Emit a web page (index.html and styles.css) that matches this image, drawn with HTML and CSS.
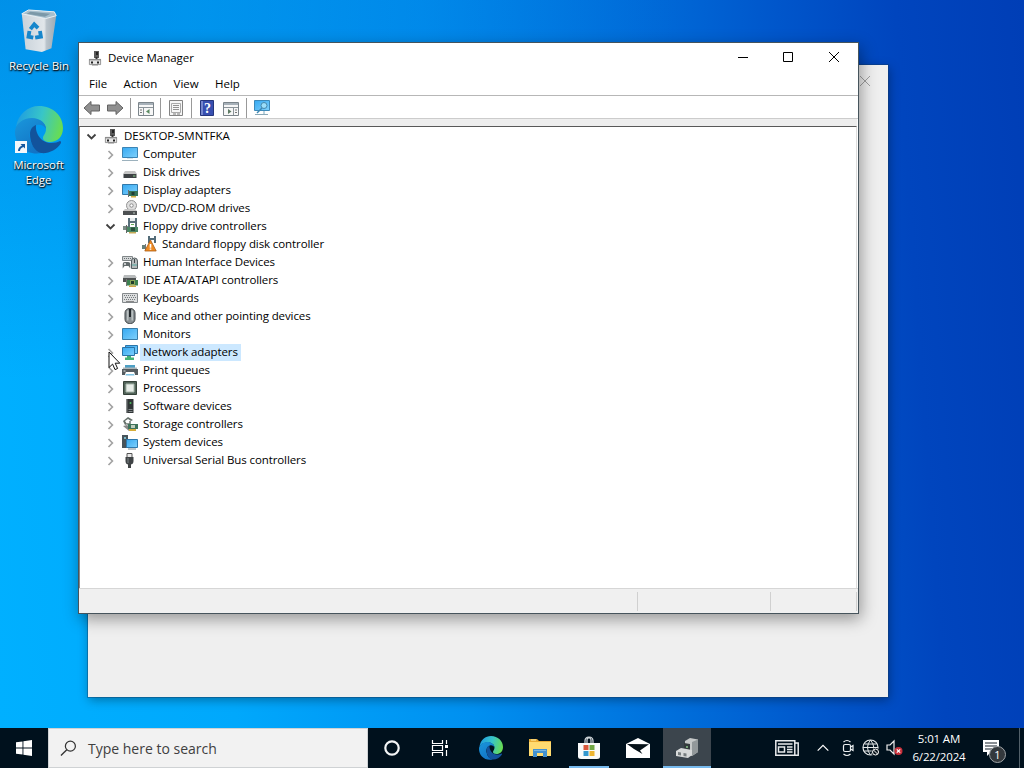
FILE: index.html
```html
<!DOCTYPE html>
<html lang="en">
<head>
	<meta charset="utf-8">
	<title>Device Manager</title>
	<link rel="stylesheet" href="styles.css">
</head>
<body>
	<svg class="sprite" aria-hidden="true">
		<defs>
			<linearGradient id="screen" x1="0" y1="0" x2="1" y2="1">
				<stop offset="0" stop-color="#36a9f2"/><stop offset="1" stop-color="#7fd0fb"/>
			</linearGradient>
			<linearGradient id="edge-top" x1="0" y1="0.4" x2="1" y2="0.6">
				<stop offset="0" stop-color="#1f9de0"/><stop offset="0.5" stop-color="#38c5c8"/><stop offset="1" stop-color="#6bde4c"/>
			</linearGradient>
			<linearGradient id="edge-left" x1="0" y1="0" x2="0.6" y2="1">
				<stop offset="0" stop-color="#1a97dc"/><stop offset="1" stop-color="#1273c4"/>
			</linearGradient>
			<linearGradient id="bin" x1="0" y1="0" x2="1" y2="0">
				<stop offset="0" stop-color="#c9d2da"/><stop offset="0.65" stop-color="#e1e6ea"/><stop offset="0.72" stop-color="#b9c3cb"/><stop offset="1" stop-color="#9eabb5"/>
			</linearGradient>
		</defs>
		<symbol id="i-right" viewBox="0 0 16 16"><path d="M6.500 5 10.400 9l-3.900 4" fill="none" stroke="#a3a3a3" stroke-width="1.700"/></symbol>
		<symbol id="i-down" viewBox="0 0 16 16"><path d="M4.500 6.500l4 4 4-4" fill="none" stroke="#404040" stroke-width="1.800"/></symbol>
		<symbol id="i-device" viewBox="0 0 16 16">
			<path d="M7 1h5v7H7z" fill="#5a5a5a"/><path d="M9 2h2v3H9z" fill="#242424"/>
			<path d="M8.500 7h2v3h-2z" fill="#333"/>
			<path d="M2.400 9.400h11.200v5.200H2.400z" fill="#e6e6e6" stroke="#808080" stroke-width=".8"/>
			<path d="M2 9h12v1.400H2z" fill="#8d8d8d"/><path d="M4 11.500h2v2H4zM10 11.500h2v2h-2z" fill="#222"/><path d="M5 14.600h6v.8H5z" fill="#777"/>
		</symbol>
		<symbol id="i-computer" viewBox="0 0 16 16">
			<path d="M.5 1.500h15v10H.5z" fill="url(#screen)" stroke="#3b84b5"/>
			<path d="M0 14h16v1H0z" fill="#9cb1bd"/><path d="M5 12h6v1H5z" fill="#d6e3ea"/>
		</symbol>
		<symbol id="i-disk" viewBox="0 0 16 16">
			<path d="M3 7h10l2 3H1z" fill="#c4c4c4"/><path d="M1.500 10h13v4h-13z" fill="#3d4144"/><path d="M11 11.500h2.400v1H11z" fill="#8fd08d"/>
		</symbol>
		<symbol id="i-display" viewBox="0 0 16 16">
			<path d="M.5 2.500h15v10H.5z" fill="url(#screen)" stroke="#3279aa"/>
			<path d="M7 9h9v5H7z" fill="#37745a"/><path d="M9.500 10h3v3h-3z" fill="#203d35"/><path d="M9 14h5v1.500H9z" fill="#d2ad43"/><path d="M6 8h1v7H6z" fill="#697074"/>
		</symbol>
		<symbol id="i-dvd" viewBox="0 0 16 16">
			<circle cx="9.500" cy="5.500" r="5" fill="#dedede" stroke="#949494"/><circle cx="9.500" cy="5.500" r="1.700" fill="#fff" stroke="#8b8b8b"/>
			<path d="M3 9h10l2 2H1z" fill="#c5c5c5"/><path d="M1 11h14v4H1z" fill="#4d5052"/><path d="M11 12.400h2v1h-2z" fill="#b9c7bd"/>
		</symbol>
		<symbol id="i-floppy" viewBox="0 0 16 16">
			<path d="M6 0h9v9H6z" fill="#596f7a"/><path d="M8 0h5v3H8z" fill="#e9eef0"/><path d="M8 5h5v4H8z" fill="#fff"/><path d="M9 6.500h3" stroke="#68ad59"/>
			<path d="M1 8h5v4H1z" fill="#798b85"/><path d="M5 9h11v5H5z" fill="#4b8765"/><path d="M9 9.500h4v3.500H9z" fill="#294f3c"/><path d="M7 14h7v1.500H7z" fill="#c6ab57"/><path d="M4 7h1v8H4z" fill="#666"/>
		</symbol>
		<symbol id="i-warning" viewBox="0 0 16 16">
			<path d="M7 0h8v7H7z" fill="#536b78"/><path d="M9 0h4v2H9zM9 4h4v3H9z" fill="#fff"/>
			<path d="M1 9h4v4H1z" fill="#66817b"/><path d="M4 8h1v6H4z" fill="#777"/>
			<path d="m9.500 4 5.700 11H3.800z" fill="#ef8b22" stroke="#a95a12" stroke-width=".8"/><path d="M8.700 8h1.600v3.700H8.700zM8.700 12.500h1.600v1.300H8.700z" fill="#fff"/>
		</symbol>
		<symbol id="i-hid" viewBox="0 0 16 16">
			<path d="M.500 2.500h10v4H.5z" fill="#d4d7d8" stroke="#818789"/><path d="M2 4.500h8" stroke="#686f72" stroke-dasharray="1 1"/>
			<path d="M9.500 14.500V7q0-3 3-3t3 3v7.500z" fill="#b5babb" stroke="#555e61"/><path d="M12.500 5v4" stroke="#41494c"/>
			<path d="M.7 14.500V10q0-2 2.200-2h3.200q2.200 0 2.200 2v4.500L6.500 12h-4z" fill="#626a6c"/><path d="M2 10h2M3 9v2" stroke="#fff" stroke-width=".8"/><path d="M10 11h5" stroke="#54aaa2"/>
		</symbol>
		<symbol id="i-ide" viewBox="0 0 16 16">
			<path d="M2 3h11l2 3H1z" fill="#b8bbbc"/><path d="M1 6h13v4H1z" fill="#4e5252"/>
			<path d="M5 8h11v5.500H5z" fill="#3d8251"/><path d="M8.500 8.500h4v4h-4z" fill="#1f3d2b" stroke="#b5c665" stroke-width=".7"/><path d="M7 13.500h7V15H7z" fill="#d0a646"/><path d="M4 7h1v7H4z" fill="#737373"/>
		</symbol>
		<symbol id="i-keyboard" viewBox="0 0 16 16">
			<path d="M.5 3.500h15v9H.5z" fill="#dcdedf" stroke="#858a8d"/><path d="M2 5.500h12M2 9.500h12" stroke="#747a7d" stroke-dasharray="1 1"/><path d="M3 7.500h11" stroke="#747a7d" stroke-dasharray="1 1"/><path d="M4 11.500h8" stroke="#888"/>
		</symbol>
		<symbol id="i-mouse" viewBox="0 0 16 16">
			<rect x="3" y=".5" width="10" height="15" rx="4.400" fill="#899093" stroke="#3f4548"/><path d="M5.800 2.500v10M10.200 2.500v10" stroke="#c4cacb" stroke-width="1.300"/><path d="M8 1v8" stroke="#22282b" stroke-width="2"/>
		</symbol>
		<symbol id="i-monitor" viewBox="0 0 16 16"><path d="M.5 2.500h15v11H.5z" fill="url(#screen)" stroke="#377ca8"/></symbol>
		<symbol id="i-network" viewBox="0 0 16 16">
			<path d="M3.500 1.500h12v8h-12z" fill="url(#screen)" stroke="#2c75a8"/><path d="M.5 3.500h12v8H.5z" fill="url(#screen)" stroke="#2c75a8"/>
			<path d="M5 12h4v1.500h3V16H3v-2.500h2z" fill="#45b276"/>
		</symbol>
		<symbol id="i-print" viewBox="0 0 16 16">
			<path d="M3 3h10v3H3z" fill="#4e9fc4"/><path d="M1 5.500h14v2H1z" fill="#aeb4b7"/><path d="M0 7h16v6h-3l-1-3H4l-1 3H0z" fill="#555c60"/><path d="M4 10h8l1 4H3z" fill="#fff"/><path d="M4 12h8l.5 1.500h-9z" fill="#7fc2e2"/><path d="M1.500 9h2" stroke="#e1e5e6"/>
		</symbol>
		<symbol id="i-cpu" viewBox="0 0 16 16"><path d="M1.500 1.500h13v13h-13z" fill="#52645a" stroke="#354239"/><path d="M4 4h8v8H4z" fill="#e7ede8" stroke="#a6b6aa"/></symbol>
		<symbol id="i-software" viewBox="0 0 16 16"><path d="M4.500 1h7v14h-7z" fill="#303536"/><path d="M4.500 1h1v14h-1z" fill="#737979"/><circle cx="8.500" cy="5" r="1" fill="#4eb65f"/><path d="M6.500 11h4v1h-4zM6.500 13h4v1h-4z" fill="#848a8b"/></symbol>
		<symbol id="i-storage" viewBox="0 0 16 16">
			<path d="m1 5 5-4 5 3-2 1-3-2-3 2 2 3-2 1z" fill="#66716b"/><path d="M8 5v3H4.500" fill="none" stroke="#6b7771" stroke-width="1.500"/>
			<path d="m1 10 4-1 4 3-2 3z" fill="#888"/><path d="M6 8h10v5H6z" fill="#3f745b"/><path d="M9 9h4v3H9z" fill="#bfcdbd"/><path d="M7 13h7v2H7z" fill="#d6ad3b"/>
		</symbol>
		<symbol id="i-system" viewBox="0 0 16 16">
			<path d="M0 1h6v13H0z" fill="#47545b"/><circle cx="3" cy="4" r="1" fill="#8dd8e9"/><path d="M4.500 5.500h11v8h-11z" fill="url(#screen)" stroke="#2d78ac"/><path d="M6 15h8" stroke="#7c8b92"/>
		</symbol>
		<symbol id="i-usb" viewBox="0 0 16 16"><path d="M5 1.500h5v4H5z" fill="#e9e9e9" stroke="#555"/><path d="M3.500 5h8v4q0 3-2.500 3.500V16H6v-3.500Q3.500 12 3.500 9z" fill="#404446"/><path d="M5.500 6h1v5h-1z" fill="#7d8385"/></symbol>
		<symbol id="i-edge" viewBox="0 0 48 48">
			<path d="M1 21C3 8 13 0 24 0c14 0 24 10 24 22 0 9-6 14-13 14-5 0-7-2-7-4 0-3 3-4 3-9 0-6-6-10-13-10C10 13 4 16 1 21z" fill="url(#edge-top)"/>
			<path d="M0 26C0 18 8 12 17 12c8 0 14 5 14 11-2-4-6-5-9-4-6 2-8 8-7 13 1 8 6 13 12 15C11 50 0 39 0 26z" fill="url(#edge-left)"/>
			<path d="M15 28c0-5 3-8 6-9-1 8 5 18 15 18 4 0 7-1 9-2 1 0 1 1 1 2-4 7-13 11-20 10-7-2-11-10-11-19z" fill="#12539c"/>
		</symbol>
	</svg>

	<main class="desktop">
		<section class="shortcuts">
			<div class="shortcut">
				<svg class="bin-icon" viewBox="0 0 40 46">
					<path d="m2 5 7-4 27 2 2 4-5 34-10 4-17-3z" fill="url(#bin)"/>
					<path d="m2 5 7-4 27 2 2 4-11 3z" fill="#a7bfcd" stroke="#e8eff3"/><path d="m7 5 4-2 21 2-6 3z" fill="#7b98a8"/>
					<g fill="none" stroke="#1686cc" stroke-width="4"><path d="m11 21 4-5 4 4"/><path d="m21 23 1 6-6 1"/><path d="m14 30-5-1 1-6"/></g>
				</svg>
				<span>Recycle Bin</span>
			</div>
			<div class="shortcut edge-shortcut">
				<svg class="edge-icon"><use href="#i-edge"/></svg>
				<svg class="link-badge" viewBox="0 0 12 12"><path d="M0 0h12v12H0z" fill="#f5f7fa"/><path d="M3 10q0-4 4-5.500L5.500 3H10v4.500L8.500 6Q5 7 5 10z" fill="#17579e"/></svg>
				<span>Microsoft<br>Edge</span>
			</div>
		</section>

		<section class="back-window">
			<svg viewBox="0 0 12 12"><path d="m1 1 10 10M11 1 1 11" stroke="#a0a0a0" fill="none"/></svg>
		</section>

		<section class="window">
			<header class="titlebar">
				<svg class="icon"><use href="#i-device"/></svg>
				<h1>Device Manager</h1>
				<div class="window-buttons">
					<svg viewBox="0 0 12 12"><path d="M1 6.500h10" stroke="#000"/></svg>
					<svg viewBox="0 0 12 12"><path d="M1.500 1.500h9v9h-9z" stroke="#000" fill="none"/></svg>
					<svg viewBox="0 0 12 12"><path d="m1 1 10 10M11 1 1 11" stroke="#000"/></svg>
				</div>
			</header>
			<nav class="menu"><span>File</span><span>Action</span><span>View</span><span>Help</span></nav>
			<div class="toolbar">
				<svg viewBox="0 0 18 18"><path d="M1 9 8 2.500V6h8.500v6H8v3.500z" fill="#909090" stroke="#626262"/></svg>
				<svg class="forward" viewBox="0 0 18 18"><path d="M17 9 10 2.500V6H1.500v6H10v3.500z" fill="#909090" stroke="#626262"/></svg>
				<i></i>
				<svg viewBox="0 0 18 18"><path d="M1.500 3.500h15v13h-15z" fill="#f7f7f7" stroke="#7c858b"/><path d="M2 4h14v2H2z" fill="#a7b1b9"/><path d="M2 8.500h14M6.500 9v7" stroke="#8b949a"/><path d="M3 11h2M3 13.500h2" stroke="#777"/><path d="m12.500 10-3.500 2.500 3.500 2.500z" fill="#5c8b62"/></svg>
				<i></i>
				<svg viewBox="0 0 18 18"><path d="M2.500 1.500h13v15h-13z" fill="#f6f6f6" stroke="#838383"/><path d="M4.500 4.500h9v9h-9z" fill="none" stroke="#aaa"/><path d="M6 6.500h6M6 8.500h6M6 10.500h6" stroke="#929292"/><path d="M6 15h3M10 15h3" stroke="#777"/></svg>
				<i></i>
				<svg viewBox="0 0 18 18"><path d="M2.500 1.500h13v15h-13z" fill="#384fb0" stroke="#25357c"/><path d="M3 2h2v14H3z" fill="#7586cd"/><text x="6" y="14" class="help-mark">?</text></svg>
				<svg viewBox="0 0 18 18"><path d="M1.500 3.500h15v13h-15z" fill="#f7f7f7" stroke="#7c858b"/><path d="M2 4h14v2H2z" fill="#a7b1b9"/><path d="M2 8.500h14M11.500 9v7" stroke="#8b949a"/><path d="M13 11h2M13 13.500h2" stroke="#777"/><path d="m6 10 3.500 2.500L6 15z" fill="#5c7a62"/></svg>
				<i></i>
				<svg viewBox="0 0 18 18"><path d="M1.500 1.500h15v10h-15z" fill="url(#screen)" stroke="#3c89b9"/><circle cx="11" cy="6.500" r="3" fill="#9cdef9" stroke="#4688ac"/><path d="m9 9-5 5" stroke="#3d88b4" stroke-width="1.500"/><path d="M2 15.500h13" stroke="#8aa8b7"/><path d="M11 12v3" stroke="#76a8c0"/></svg>
			</div>
			<div class="tree">
				<div class="row root"><svg><use href="#i-down"/></svg><svg><use href="#i-device"/></svg><span>DESKTOP-SMNTFKA</span></div>
				<div class="row"><svg><use href="#i-right"/></svg><svg><use href="#i-computer"/></svg><span>Computer</span></div>
				<div class="row"><svg><use href="#i-right"/></svg><svg><use href="#i-disk"/></svg><span>Disk drives</span></div>
				<div class="row"><svg><use href="#i-right"/></svg><svg><use href="#i-display"/></svg><span>Display adapters</span></div>
				<div class="row"><svg><use href="#i-right"/></svg><svg><use href="#i-dvd"/></svg><span>DVD/CD-ROM drives</span></div>
				<div class="row"><svg><use href="#i-down"/></svg><svg><use href="#i-floppy"/></svg><span>Floppy drive controllers</span></div>
				<div class="row child"><svg><use href="#i-warning"/></svg><span>Standard floppy disk controller</span></div>
				<div class="row"><svg><use href="#i-right"/></svg><svg><use href="#i-hid"/></svg><span>Human Interface Devices</span></div>
				<div class="row"><svg><use href="#i-right"/></svg><svg><use href="#i-ide"/></svg><span>IDE ATA/ATAPI controllers</span></div>
				<div class="row"><svg><use href="#i-right"/></svg><svg><use href="#i-keyboard"/></svg><span>Keyboards</span></div>
				<div class="row"><svg><use href="#i-right"/></svg><svg><use href="#i-mouse"/></svg><span>Mice and other pointing devices</span></div>
				<div class="row"><svg><use href="#i-right"/></svg><svg><use href="#i-monitor"/></svg><span>Monitors</span></div>
				<div class="row selected"><svg><use href="#i-right"/></svg><svg><use href="#i-network"/></svg><span>Network adapters</span></div>
				<div class="row"><svg><use href="#i-right"/></svg><svg><use href="#i-print"/></svg><span>Print queues</span></div>
				<div class="row"><svg><use href="#i-right"/></svg><svg><use href="#i-cpu"/></svg><span>Processors</span></div>
				<div class="row"><svg><use href="#i-right"/></svg><svg><use href="#i-software"/></svg><span>Software devices</span></div>
				<div class="row"><svg><use href="#i-right"/></svg><svg><use href="#i-storage"/></svg><span>Storage controllers</span></div>
				<div class="row"><svg><use href="#i-right"/></svg><svg><use href="#i-system"/></svg><span>System devices</span></div>
				<div class="row"><svg><use href="#i-right"/></svg><svg><use href="#i-usb"/></svg><span>Universal Serial Bus controllers</span></div>
			</div>
			<footer class="statusbar"><div></div><div></div><div></div></footer>
		</section>
		<svg class="cursor" viewBox="0 0 13 20"><path d="M1 1v15.500l3.600-3.400 2.400 5.500 2.600-1.100-2.400-5.300h4.600z" fill="#fff" stroke="#111"/></svg>
	</main>

	<footer class="taskbar">
		<div class="start"><svg viewBox="0 0 16 16"><path d="M0 2.300 6.500 1.400v6.100H0zM7.400 1.300 16 0v7.500H7.400zM0 8.400h6.500v6.200L0 13.700zM7.400 8.400H16V16l-8.600-1.200z" fill="#fff"/></svg></div>
		<div class="search">
			<svg viewBox="0 0 18 18"><circle cx="11" cy="6.500" r="5.300" fill="none" stroke="#333" stroke-width="1.300"/><path d="M7.200 10.300 1 16.500" stroke="#333" stroke-width="1.400"/></svg>
			<span>Type here to search</span>
		</div>
		<div class="apps">
			<div><svg viewBox="0 0 24 24"><circle cx="12" cy="12" r="6.700" fill="none" stroke="#f3f5f6" stroke-width="2.200"/></svg></div>
			<div><svg viewBox="0 0 24 24"><path d="M4.500 4v3.500h10V4M4.500 20v-3.500h10V20M4.500 9.500h10v5h-10zM18.500 4v4M18.500 14v6" fill="none" stroke="#fff" stroke-width="1.200"/><path d="M17 9h3v3h-3z" fill="#fff"/></svg></div>
			<div><svg><use href="#i-edge"/></svg></div>
			<div><svg viewBox="0 0 24 24"><path d="M1 3h8l2 2h12v15H1z" fill="#e9ac35"/><path d="M1 6h22v14H1z" fill="#ffdb70"/><path d="M5 13h14v8h-4v-4H9v4H5z" fill="#4291cf"/><path d="M6 14.500h12" stroke="#7ab6e2"/><path d="M3 4h5" stroke="#fff4ae"/></svg></div>
			<div class="running"><svg viewBox="0 0 24 24"><path d="M8 7V5q0-4 4-4t4 4v2M10 7V4q0-2 2-2t2 2v3" fill="none" stroke="#d6dde1" stroke-width="1.200"/><path d="M1 7h22v13.500q0 2.500-3 2.500H4q-3 0-3-2.500z" fill="#f9fafa"/><path d="M6.500 9h5v5h-5z" fill="#d9573b"/><path d="M12.500 9h5v5h-5z" fill="#71a744"/><path d="M6.500 15h5v5h-5z" fill="#3498ce"/><path d="M12.500 15h5v5h-5z" fill="#eeb632"/></svg></div>
			<div><svg viewBox="0 0 24 24"><path d="m0 8 12-6 12 6v14H0z" fill="#fff"/><path d="m1 8 22 .2-9 6.300 2.500 3.500L8 13z" fill="#071219"/></svg></div>
			<div class="active"><svg viewBox="0 0 24 24"><path d="m10 5 5-3 8 1.500V16l-6 4-7-2z" fill="#c5c8c8"/><path d="m17 6 6-2.500V16l-6 4z" fill="#92989a"/><path d="m9 7 6 1v8l-6-1z" fill="#343b3d"/><path d="m1 15 5-3 11 2v5l-4 3-12-2z" fill="#d8dada"/><path d="m3 16 3 .5v3L3 19zM8.500 17l3 .5v3l-3-.5z" fill="#777d7f"/><path d="M11 10h2v2h-2z" fill="#75a377"/></svg></div>
		</div>
		<div class="tray">
			<svg class="news" viewBox="0 0 24 16"><path d="M.8.800h19v14.400h-19zM20 3h3.200v12.200H19M3.500 7h6v5h-6z" fill="none" stroke="#e7eaec" stroke-width="1.500"/><path d="M3 4h14.500M12 7h5.500M12 9.500h5.500M12 12h5.500" stroke="#e7eaec" stroke-width="1.300"/></svg>
			<svg class="up" viewBox="0 0 12 8"><path d="m.7 6.700 5.300-5.300 5.300 5.300" fill="none" stroke="#fff" stroke-width="1.200"/></svg>
			<svg class="camera" viewBox="0 0 14 18"><rect x="2.500" y="5.500" width="7" height="7" rx="1.500" fill="none" stroke="#edf0f1" stroke-width="1.200"/><path d="M9.500 8l2.500-1.500v5L9.500 10M2.500 3q3.500-3 7 0M2.500 15q3.500 3 7 0" fill="none" stroke="#edf0f1" stroke-width="1.200"/></svg>
			<svg class="globe" viewBox="0 0 18 18"><circle cx="8.500" cy="8.500" r="7.500" fill="none" stroke="#e6e9ea" stroke-width="1.200"/><path d="M1 8.500h15M2.500 5h12M2.500 12h8M8.500 1q-6 7.500 0 15M8.500 1q6 7.500 1 14" fill="none" stroke="#e6e9ea"/><circle cx="13.500" cy="13" r="4" fill="#08131a"/><circle cx="13.500" cy="13" r="3" fill="none" stroke="#fff"/><path d="m11.500 11 4 4" stroke="#fff"/></svg>
			<svg class="sound" viewBox="0 0 18 18"><path d="M1 6h3l4-4v13l-4-4H1z" fill="none" stroke="#f0f0f0" stroke-width="1.200"/><circle cx="12.500" cy="12" r="4" fill="#c9303b"/><path d="m10.800 10.300 3.400 3.400m0-3.400-3.400 3.400" stroke="#fff" stroke-width="1.200"/></svg>
			<div class="clock">5:01 AM<br>6/22/2024</div>
			<div class="notice"><svg viewBox="0 0 16 18"><path d="M0 1h16v12H8l-4 4v-4H0z" fill="#fff"/><path d="M2 4h12M2 7h12M2 10h12" stroke="#17212a" stroke-width="1.200"/></svg><b>1</b></div>
		</div>
	</footer>
</body>
</html>
```
FILE: styles.css
```css
* {
	box-sizing: border-box;
}
body {
	width: 1024px;
	height: 768px;
	margin: 0;
	overflow: hidden;
	font-family: "Open Sans", "Noto Sans", sans-serif;
	font-size: 11.5px;
	color: #000;
}
svg {
	display: block;
	flex: none;
}
.sprite {
	position: absolute;
	width: 0;
	height: 0;
}
.desktop {
	position: relative;
	height: 728px;
	background: radial-gradient(ellipse 700px 380px at 0 0, rgba(0,100,200,.4), transparent), linear-gradient(86deg, #00b0ff 0%, #00a8fc 22%, #0090f0 44%, #0070dc 62%, #0056cb 77%, #0045be 88%, #003eb6 100%);
}
.shortcuts {
	width: 78px;
	padding-top: 9px;
}
.shortcut {
	position: relative;
	display: flex;
	flex-direction: column;
	align-items: center;
	height: 97px;
	color: white;
	text-align: center;
	line-height: 15px;
	text-shadow: 0 1px 2px #000, 1px 1px 1px #123;
}
.bin-icon {
	width: 40px;
	height: 44px;
	margin-bottom: 5px;
}
.edge-icon {
	width: 48px;
	height: 48px;
	margin-bottom: 3px;
}
.edge-shortcut {
	padding-right: 1px;
}
.link-badge {
	position: absolute;
	left: 15px;
	top: 35px;
	width: 12px;
	height: 12px;
}
.back-window {
	position: absolute;
	left: 88px;
	top: 65px;
	width: 800px;
	height: 632px;
	background: #efefef;
	box-shadow: 0 0 0 1px rgba(20,60,100,.4), 1px 3px 10px rgba(0,0,0,.35);
}
.back-window svg {
	width: 12px;
	height: 12px;
	margin: 10px 0 0 771px;
}
.window {
	position: absolute;
	left: 78px;
	top: 42px;
	display: flex;
	flex-direction: column;
	width: 781px;
	height: 572px;
	background: white;
	border: 1px solid #46545c;
	box-shadow: 2px 5px 15px rgba(0,0,0,.38);
}
.titlebar {
	display: flex;
	align-items: center;
	height: 30px;
	padding-left: 8px;
}
.icon {
	width: 16px;
	height: 16px;
}
h1 {
	margin: 0 0 2px 5px;
	font-size: 11.5px;
	font-weight: normal;
}
.window-buttons {
	display: flex;
	gap: 33px;
	margin-left: auto;
	padding: 0 18px 2px 0;
}
.window-buttons svg {
	width: 12px;
	height: 12px;
}
.window-buttons svg:last-child {
	margin-left: 1px;
}
.menu {
	display: flex;
	gap: 16.3px;
	height: 23px;
	padding: 3px 10px 0;
	line-height: 16px;
	border-bottom: 1px solid #b7b7b7;
}
.toolbar {
	display: flex;
	align-items: center;
	height: 23px;
	padding: 1px 0 0 4px;
	border-bottom: 1px solid #ccc;
}
.toolbar svg {
	width: 18px;
	height: 18px;
}
.toolbar .forward {
	margin-left: 5px;
}
.toolbar i {
	width: 1px;
	height: 20px;
	margin: 0 6px 0 5.7px;
	background: #999;
}
.toolbar svg + svg:not(.forward) {
	margin-left: 6px;
}
.help-mark {
	fill: white;
	font: bold 14px "Liberation Serif", serif;
}
.tree {
	flex: 1;
	margin: 7px 1px 0 0;
	border-top: 1px solid #595959;
	border-left: 1px solid #888;
	border-right: 1px solid #ddd;
	box-shadow: 0 -7px #eee;
}
.row {
	display: flex;
	align-items: center;
	height: 18px;
	padding-left: 22px;
}
.row svg {
	width: 16px;
	height: 16px;
}
.row svg + svg {
	margin-left: 4px;
}
.row span {
	height: 17px;
	padding: 0 3px;
	margin-left: 2px;
	line-height: 15px;
	letter-spacing: -.1px;
	white-space: nowrap;
}
.root {
	padding-left: 3px;
}
.root span {
	letter-spacing: 0;
}
.child {
	padding-left: 61px;
}
.selected span {
	background: #cce8ff;
}
.statusbar {
	display: grid;
	grid-template-columns: 559px 133px 1fr;
	height: 25px;
	padding: 3px 1px 2px 0;
	background: #f0f0f0;
	border-top: 1px solid #d6d6d6;
}
.statusbar div {
	border-right: 1px solid #d0d0d0;
}
.cursor {
	position: absolute;
	left: 108px;
	top: 351px;
	width: 13px;
	height: 20px;
}
.taskbar {
	display: flex;
	height: 40px;
	background: #00111d;
	color: white;
}
.start {
	display: flex;
	align-items: center;
	justify-content: center;
	width: 48px;
}
.start svg {
	width: 16px;
	height: 16px;
}
.search {
	display: flex;
	align-items: center;
	width: 320px;
	padding-left: 11px;
	border: 1px solid #cfd2d4;
	background: #f2f2f2;
	color: #404040;
	font-size: 14px;
}
.search svg {
	width: 17px;
	height: 17px;
	margin-right: 11px;
}
.apps {
	display: flex;
	gap: 1px;
}
.apps > div {
	display: flex;
	align-items: center;
	justify-content: center;
	width: 48px;
	height: 40px;
}
.apps > div:nth-child(2) {
	margin-left: -1px;
}
.apps > div:nth-child(3) {
	margin-left: 2px;
}
.apps svg {
	width: 24px;
	height: 24px;
}
.apps .running {
	background: linear-gradient(#76b9ed, #76b9ed) center bottom / 40px 2px no-repeat;
}
.apps .active {
	background: #3c454d;
	box-shadow: inset 0 -2px #76b9ed;
}
.tray {
	display: flex;
	align-items: center;
	margin-left: auto;
	width: 249px;
	padding-right: 4px;
}
.news {
	width: 24px;
	height: 16px;
}
.up {
	width: 12px;
	height: 8px;
	margin-left: 18px;
}
.camera {
	width: 14px;
	height: 18px;
	margin-left: 12px;
}
.globe {
	width: 18px;
	height: 18px;
	margin-left: 7px;
}
.sound {
	width: 18px;
	height: 18px;
	margin-left: 6px;
}
.clock {
	width: 60px;
	margin-left: 5px;
	text-align: center;
	line-height: 18px;
	letter-spacing: -.15px;
}
.notice {
	position: relative;
	display: flex;
	align-items: center;
	height: 40px;
	margin-left: auto;
	padding-right: 19px;
	border-right: 1px solid #526069;
}
.notice svg {
	width: 18px;
	height: 18px;
}
.notice b {
	position: absolute;
	left: 7px;
	top: 18px;
	width: 17px;
	height: 17px;
	border: 1px solid #a0a5a8;
	border-radius: 50%;
	background: #34393d;
	font-size: 11px;
	font-weight: normal;
	line-height: 15px;
	text-align: center;
}
```
